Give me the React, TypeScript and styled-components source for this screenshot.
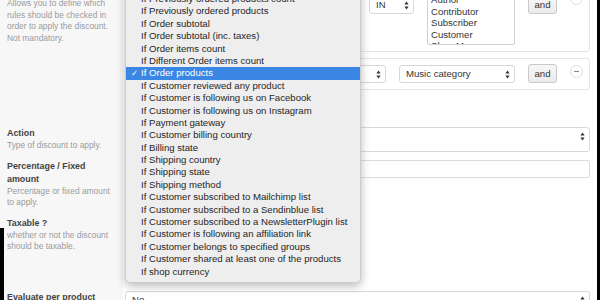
import React from 'react';
import styled, { createGlobalStyle } from 'styled-components';

const GlobalStyle = createGlobalStyle`
  body {
    margin: 0;
    font-family: "Liberation Sans", Helvetica, Arial, sans-serif;
    background: #fff;
  }
`;

const Window = styled.div`
  position: relative;
  width: 600px;
  height: 300px;
  overflow: hidden;
  background: #fff;
  border-right: 3px solid #000;
  box-sizing: border-box;

  &::before {
    content: '';
    position: absolute;
    left: 0;
    top: 228px;
    width: 4px;
    height: 72px;
    background: #000;
    z-index: 3;
  }
`;

const Scroller = styled.div`
  margin-top: -19px;
`;

const Row = styled.div`
  display: grid;
  grid-template-columns: 123px 1fr;
`;

const LabelCell = styled.div`
  background: #f7f7f7;
  padding: 4px 8px 4px 7px;
`;

const LabelTitle = styled.div`
  font-size: 8.9px;
  font-weight: 700;
  line-height: 13px;
  color: #444;
`;

const LabelDesc = styled.div`
  font-size: 8.4px;
  line-height: 11.6px;
  color: #9b9b9b;
`;

const FieldCell = styled.div<{ $minHeight?: number }>`
  padding: 4px 7px 4px 2px;
  min-height: ${(p) => (p.$minHeight ? `${p.$minHeight}px` : 'auto')};
  display: flex;
  flex-direction: column;
  gap: 6px;
`;

const RuleCard = styled.div`
  border: 1px solid #e6e6e6;
  border-radius: 3px;
  padding: 6px 6px 6px 8px;
  display: flex;
  align-items: flex-start;
  gap: 13px;
`;

const SelectBox = styled.div<{ $width?: number; $top?: number }>`
  position: relative;
  box-sizing: border-box;
  height: 18px;
  ${(p) => (p.$width ? `width: ${p.$width}px; flex: none;` : 'flex: 1;')}
  margin-top: ${(p) => p.$top ?? 0}px;
  border: 1px solid #d8d8d8;
  border-radius: 3px;
  background: #fff;
  font-size: 9.6px;
  line-height: 16px;
  color: #333;
  padding: 0 16px 0 6px;
  white-space: nowrap;
  overflow: hidden;
`;

const ArrowWrap = styled.span`
  position: absolute;
  right: 4px;
  top: 4px;
  width: 5px;
  height: 9px;
  display: flex;
`;

const Arrows = () => (
  <ArrowWrap>
    <svg width="5" height="9" viewBox="0 0 5 9">
      <path d="M2.5 0.5 L4.6 3.6 L0.4 3.6 Z" fill="#333" />
      <path d="M2.5 8.5 L4.6 5.4 L0.4 5.4 Z" fill="#333" />
    </svg>
  </ArrowWrap>
);

const Select = ({
  children,
  width,
  top,
}: {
  children?: React.ReactNode;
  width?: number;
  top?: number;
}) => (
  <SelectBox $width={width} $top={top}>
    {children}
    <Arrows />
  </SelectBox>
);

const ListBox = styled.div`
  box-sizing: border-box;
  width: 88px;
  flex: none;
  height: 53px;
  border: 1px solid #d0d0d0;
  border-radius: 2px;
  background: #fff;
  overflow: hidden;
  padding: 1px 3px;
  font-size: 9.6px;
  line-height: 11.6px;
  color: #333;
`;

const AndButton = styled.button<{ $top?: number }>`
  box-sizing: border-box;
  width: 29px;
  height: 19px;
  flex: none;
  margin-top: ${(p) => p.$top ?? -1}px;
  padding: 0;
  border: 1px solid #c9c9c9;
  border-radius: 3px;
  background: linear-gradient(#f7f7f7, #ebebeb);
  font-family: inherit;
  font-size: 9.6px;
  color: #333;
`;

const MinusButton = styled.span<{ $top?: number }>`
  box-sizing: border-box;
  width: 13px;
  height: 13px;
  flex: none;
  margin-top: ${(p) => p.$top ?? 0}px;
  border: 1px solid #dcdcdc;
  border-radius: 50%;
  background: #fff;
  display: flex;
  align-items: center;
  justify-content: center;

  &::after {
    content: '';
    width: 5px;
    height: 1px;
    background: #888;
  }
`;

const AddRule = styled.button`
  box-sizing: border-box;
  width: 70px;
  height: 18px;
  margin-top: 5px;
  border: 1px solid #c9c9c9;
  border-radius: 3px;
  background: #f4f4f4;
  font-family: inherit;
  font-size: 9.6px;
  color: #333;
`;

const TextInput = styled.div`
  box-sizing: border-box;
  height: 18px;
  border: 1px solid #dcdcdc;
  border-radius: 2px;
  background: #fff;
`;

const CheckBox = styled.span`
  box-sizing: border-box;
  width: 12px;
  height: 12px;
  margin-top: 3px;
  border: 1px solid #bbb;
  border-radius: 2px;
  background: #fff;
`;

const Menu = styled.div`
  position: absolute;
  left: 125px;
  top: -12px;
  width: 236px;
  box-sizing: border-box;
  padding: 4px 0;
  background: #eeeeee;
  border: 1px solid rgba(0, 0, 0, 0.14);
  border-radius: 5px;
  box-shadow: 0 3px 10px rgba(0, 0, 0, 0.28);
  z-index: 2;
`;

const MenuItem = styled.div<{ $active?: boolean }>`
  position: relative;
  height: 12.4px;
  line-height: 12.4px;
  padding-left: 15px;
  font-size: 9.6px;
  white-space: nowrap;
  color: ${(p) => (p.$active ? '#fff' : '#1f1f1f')};
  background: ${(p) => (p.$active ? '#3a86e4' : 'transparent')};
`;

const Check = styled.span`
  position: absolute;
  left: 5px;
  top: 0;
  font-family: "DejaVu Sans", sans-serif;
  font-size: 8.5px;
`;

const menuItems = [
  'If Previously ordered products count',
  'If Previously ordered products',
  'If Order subtotal',
  'If Order subtotal (inc. taxes)',
  'If Order items count',
  'If Different Order items count',
  'If Order products',
  'If Customer reviewed any product',
  'If Customer is following us on Facebook',
  'If Customer is following us on Instagram',
  'If Payment gateway',
  'If Customer billing country',
  'If Billing state',
  'If Shipping country',
  'If Shipping state',
  'If Shipping method',
  'If Customer subscribed to Mailchimp list',
  'If Customer subscribed to a Sendinblue list',
  'If Customer subscribed to a NewsletterPlugin list',
  'If Customer is following an affiliation link',
  'If Customer belongs to specified groups',
  'If Customer shared at least one of the products',
  'If shop currency',
];

const selected = 'If Order products';

const roles = ['Author', 'Contributor', 'Subscriber', 'Customer', 'Shop Manager'];

export default function App() {
  return (
    <>
      <GlobalStyle />
      <Window>
        <Scroller>
          <Row>
            <LabelCell>
              <LabelTitle>Rules</LabelTitle>
              <LabelDesc>
                Allows you to define which rules should be checked in order to apply the discount. Not
                mandatory.
              </LabelDesc>
            </LabelCell>
            <FieldCell>
              <RuleCard>
                <Select top={4}>If Customer role</Select>
                <Select width={45} top={4}>
                  IN
                </Select>
                <ListBox>
                  {roles.map((r) => (
                    <div key={r}>{r}</div>
                  ))}
                </ListBox>
                <AndButton $top={3}>and</AndButton>
                <MinusButton $top={0} />
              </RuleCard>
              <RuleCard>
                <Select>If Order products</Select>
                <Select width={116}>Music category</Select>
                <AndButton>and</AndButton>
                <MinusButton />
              </RuleCard>
              <AddRule>Add a rule</AddRule>
            </FieldCell>
          </Row>

          <Row>
            <LabelCell>
              <LabelTitle>Action</LabelTitle>
              <LabelDesc>Type of discount to apply.</LabelDesc>
            </LabelCell>
            <FieldCell>
              <Select>Percentage off the cart total</Select>
            </FieldCell>
          </Row>

          <Row>
            <LabelCell>
              <LabelTitle>Percentage / Fixed amount</LabelTitle>
              <LabelDesc>Percentage or fixed amount to apply.</LabelDesc>
            </LabelCell>
            <FieldCell>
              <TextInput />
            </FieldCell>
          </Row>

          <Row>
            <LabelCell>
              <LabelTitle>Taxable ?</LabelTitle>
              <LabelDesc>whether or not the discount should be taxable.</LabelDesc>
            </LabelCell>
            <FieldCell $minHeight={66}>
              <CheckBox />
            </FieldCell>
          </Row>

          <Row>
            <LabelCell>
              <LabelTitle>Evaluate per product</LabelTitle>
              <LabelDesc>&nbsp;</LabelDesc>
            </LabelCell>
            <FieldCell>
              <Select>No</Select>
            </FieldCell>
          </Row>
        </Scroller>

        <Menu>
          {menuItems.map((item) => (
            <MenuItem key={item} $active={item === selected}>
              {item === selected && <Check>✓</Check>}
              {item}
            </MenuItem>
          ))}
        </Menu>
      </Window>
    </>
  );
}
